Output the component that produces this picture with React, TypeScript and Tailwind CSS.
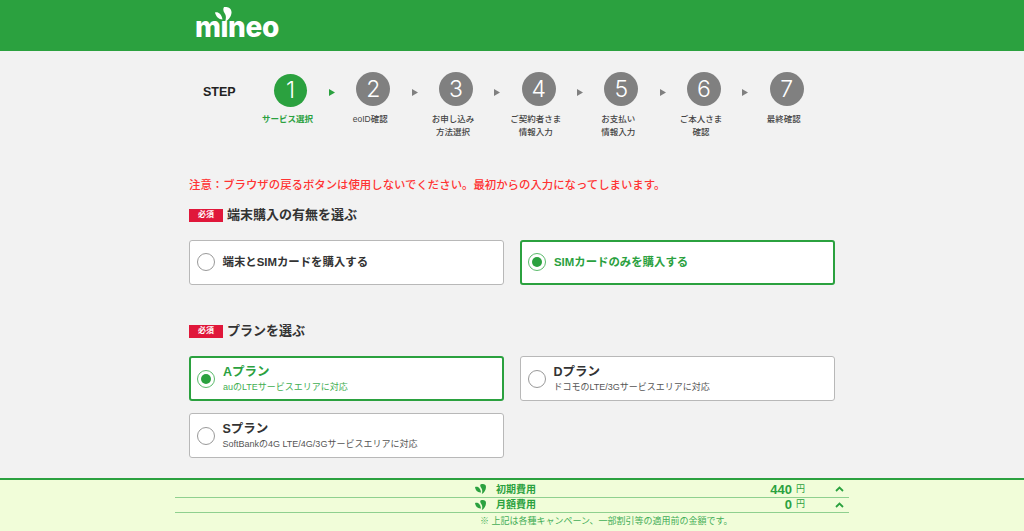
const steps = [
  { no: "1", label: ["サービス選択"], active: true },
  { no: "2", label: ["eoID確認"] },
  { no: "3", label: ["お申し込み", "方法選択"] },
  { no: "4", label: ["ご契約者さま", "情報入力"] },
  { no: "5", label: ["お支払い", "情報入力"] },
  { no: "6", label: ["ご本人さま", "確認"] },
  { no: "7", label: ["最終確認"] },
];

function Arrow({ active }: { active?: boolean }) {
  return (
    <svg width="6" height="7" viewBox="0 0 6 7" className="mx-auto">
      <path d="M0 0L6 3.5L0 7Z" fill={active ? "#2ba13f" : "#808080"} />
    </svg>
  );
}

function Stepper() {
  return (
    <div className="flex h-[110px] pl-[203px] pt-[21px]">
      <div className="w-[55.6px] pt-[13px] text-[12.5px] leading-[15px] font-bold text-[#222]">STEP</div>
      {steps.map((s, i) => (
        <div key={s.no} className="flex items-start">
          <div className="flex w-[64px] flex-col items-center">
            <div
              className={
                s.active
                  ? "mt-[2px] mb-[5px] flex h-[33px] w-[33px] items-center justify-center rounded-full bg-[#2ba13f] font-['Inter'] text-[23px] font-light text-white"
                  : "mb-[6px] flex h-[34px] w-[34px] items-center justify-center rounded-full bg-[#808080] font-['Inter'] text-[23px] font-light text-white"
              }
            >
              {s.no}
            </div>
            {s.label.map((l) => (
              <div
                key={l}
                className={
                  s.active
                    ? "pt-[1px] pr-[6px] text-[8.5px] leading-[12px] font-bold whitespace-nowrap text-[#2ba13f]"
                    : "pt-[1px] pr-[6px] text-[8.5px] leading-[12px] font-medium whitespace-nowrap text-[#444]"
                }
              >
                {l}
              </div>
            ))}
          </div>
          {i < steps.length - 1 && (
            <div className="w-[18.7px] pt-[17px]">
              <Arrow active={s.active} />
            </div>
          )}
        </div>
      ))}
    </div>
  );
}

function Heading({ children }: { children: string }) {
  return (
    <div className="flex items-center gap-[4px]">
      <span className="flex h-[13px] w-[34px] items-center justify-center bg-[#e0173a] text-[8px] font-bold text-white">
        必須
      </span>
      <h2 className="text-[13px] leading-[18px] font-bold text-[#333]">{children}</h2>
    </div>
  );
}

function Radio({ checked }: { checked?: boolean }) {
  return (
    <span
      className={
        checked
          ? "flex h-[18px] w-[18px] shrink-0 items-center justify-center rounded-full border border-[#5cbb6c] bg-white"
          : "h-[18px] w-[18px] shrink-0 rounded-full border-[1.5px] border-[#999] bg-white"
      }
    >
      {checked && <span className="h-[10px] w-[10px] rounded-full bg-[#2ba13f]" />}
    </span>
  );
}

function Card({
  title,
  sub,
  checked,
}: {
  title: string;
  sub?: string;
  checked?: boolean;
}) {
  return (
    <div
      className={
        (checked
          ? "flex h-[45px] items-center gap-[8px] rounded-[3px] border-2 border-[#2ba13f] bg-white pl-[6px] "
          : "flex h-[45px] items-center gap-[8px] rounded-[3px] border-[1.5px] border-[#b8b8b8] bg-white pl-[6.5px] ") +
        (sub ? "" : "pb-[1px]")
      }
    >
      <Radio checked={checked} />
      <div>
        <div
          className={
            (sub ? "text-[12.5px] leading-[18px] " : "text-[11.4px] leading-[16px] ") +
            "font-bold " +
            (checked ? "text-[#2ba13f]" : "text-[#333]")
          }
        >
          {title}
        </div>
        {sub && (
          <div className={"text-[9px] leading-[13px] " + (checked ? "text-[#3fae52]" : "text-[#555]")}>
            {sub}
          </div>
        )}
      </div>
    </div>
  );
}

function FeeIcon() {
  return (
    <svg width="11" height="10" viewBox="0 0 11 10" className="shrink-0">
      <path d="M0 3C2.500 2 5.500 3.500 6 8.500C2.500 8.800 0.500 6.500 0 3Z" fill="#2ba13f" />
      <path d="M5.500 0.500C8 -0.500 11 0 11 3C11 6 9 9 6.800 10C7.500 7.500 7.500 5.500 6.300 4C5.200 2.800 5 1.500 5.500 0.500Z" fill="#2ba13f" />
    </svg>
  );
}

function FeeRow({ label, amount }: { label: string; amount: string }) {
  return (
    <div className="flex h-[15.500px] items-center border-b border-[#8fd08f] pl-[300px]">
      <FeeIcon />
      <span className="ml-[10px] text-[10px] font-bold text-[#2ba13f]">{label}</span>
      <span className="ml-auto text-[13px] font-bold text-[#2ba13f]">{amount}</span>
      <span className="ml-[4px] text-[9px] text-[#2ba13f]">円</span>
      <div className="flex w-[44px] justify-end pr-[5px]">
        <svg width="9" height="6" viewBox="0 0 9 6">
          <path d="M1 5L4.500 1.500L8 5" fill="none" stroke="#2ba13f" strokeWidth="1.800" />
        </svg>
      </div>
    </div>
  );
}

export default function App() {
  return (
    <div className="flex h-[531px] flex-col overflow-hidden bg-[#f2f2f2] font-['Liberation_Sans','Noto_Sans_CJK_JP',sans-serif]">
      <header className="h-[51px] shrink-0 bg-[#2ba13f] pl-[195px]">
        <div className="relative h-full w-[84px]">
          <span className="absolute top-[11px] left-0 font-['Inter'] text-[28px] leading-[32px] font-extrabold tracking-[-0.4px] text-white">
            mineo
          </span>
          {/* covers the dot of the i, the logo has a drop there */}
          <svg width="18" height="16" viewBox="0 0 18 16" className="absolute top-[7px] left-[20px]">
            <rect x="1" y="3" width="13" height="10" fill="#2ba13f" />
            <path d="M0 5.500C3 4.500 6.500 7 7.500 12.500C3.500 12.500 1 9.500 0 5.500Z" fill="#fff" />
            <path d="M9 0C13 -0.500 17 1.500 16.500 6C16 10 13 13.500 10 15C11.500 10.500 11 8 9.500 6C8 4 8 1.500 9 0Z" fill="#fff" />
          </svg>
        </div>
      </header>

      <Stepper />

      <main className="mx-auto w-[646px] flex-1">
        <p className="pt-[16px] text-[11.4px] leading-[16px] font-medium text-[#ff3333]">
          注意：ブラウザの戻るボタンは使用しないでください。最初からの入力になってしまいます。
        </p>
        <div className="mt-[13px]">
          <Heading>端末購入の有無を選ぶ</Heading>
        </div>
        <div className="mt-[16px] grid grid-cols-2 gap-[16px]">
          <Card title="端末とSIMカードを購入する" />
          <Card title="SIMカードのみを購入する" checked />
        </div>
        <div className="mt-[37px]">
          <Heading>プランを選ぶ</Heading>
        </div>
        <div className="mt-[16px] grid grid-cols-2 gap-x-[16px] gap-y-[12px]">
          <Card title="Aプラン" sub="auのLTEサービスエリアに対応" checked />
          <Card title="Dプラン" sub="ドコモのLTE/3Gサービスエリアに対応" />
          <Card title="Sプラン" sub="SoftBankの4G LTE/4G/3Gサービスエリアに対応" />
        </div>
      </main>

      <footer className="h-[53px] shrink-0 border-t-2 border-[#2ba13f] bg-[#f1fdd9]">
        <div className="mx-auto w-[674px] pt-[2px]">
          <FeeRow label="初期費用" amount="440" />
          <FeeRow label="月額費用" amount="0" />
          <p className="pt-[2px] pl-[305px] text-[9px] leading-[13px] text-[#43ad57]">
            ※ 上記は各種キャンペーン、一部割引等の適用前の金額です。
          </p>
        </div>
      </footer>
    </div>
  );
}
